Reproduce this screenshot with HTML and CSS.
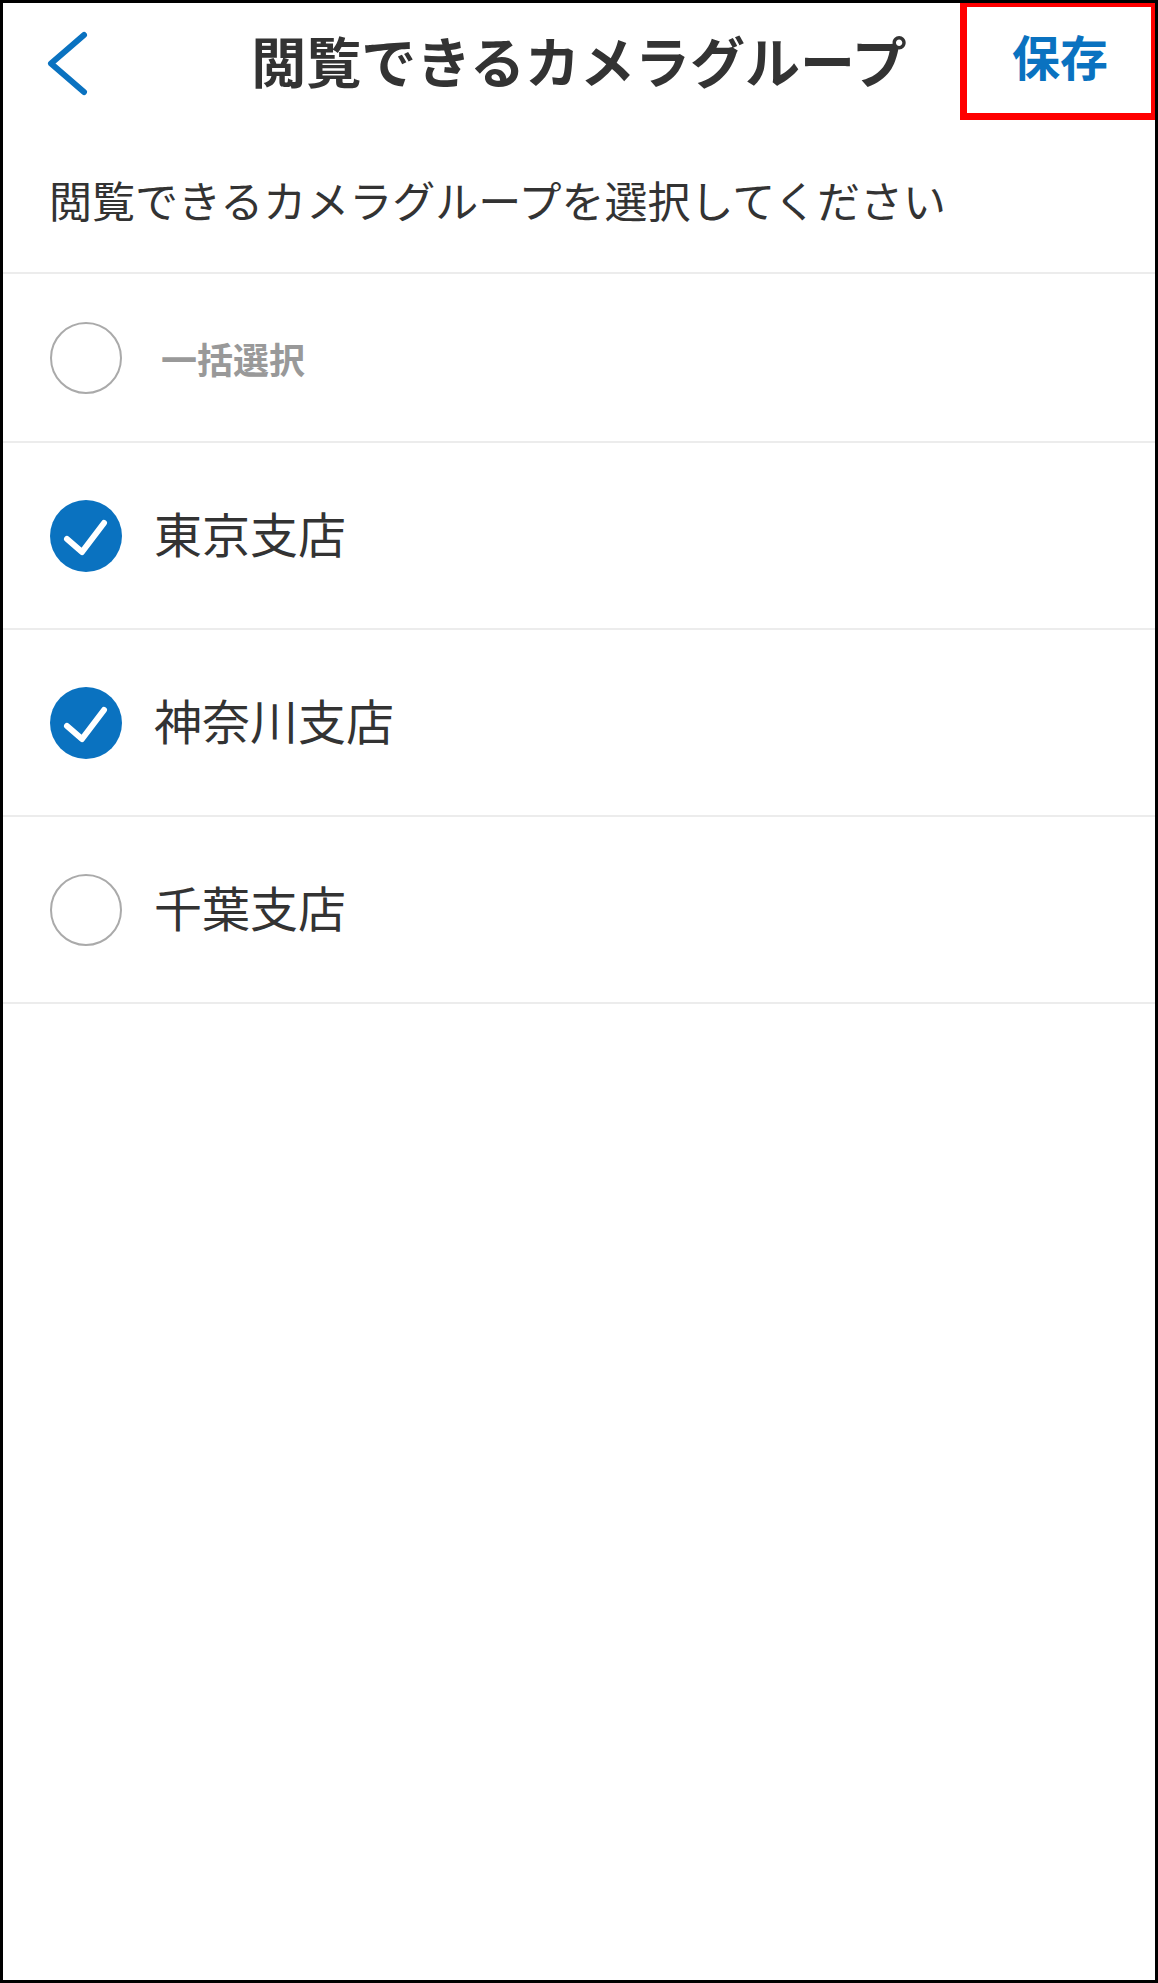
FILE: index.html
```html
<!DOCTYPE html>
<html lang="ja">
<head>
<meta charset="utf-8">
<title>閲覧できるカメラグループ</title>
<link rel="stylesheet" href="styles.css">
</head>
<body>
<div class="screen">
  <header class="header">
    <div class="back">
      <svg class="back-icon" width="46" height="76" viewBox="0 0 46 76" aria-hidden="true">
        <path d="M40 10 L7 38.5 L40 67" fill="none" stroke="#0a72c0" stroke-width="6" stroke-linecap="round" stroke-linejoin="round"/>
      </svg>
    </div>
    <h1 class="title">閲覧できるカメラグループ</h1>
    <div class="save">保存</div>
  </header>
  <p class="subtitle">閲覧できるカメラグループを選択してください</p>
  <ul class="list">
    <li class="row row-all">
      <span class="radio"></span>
      <span class="label-all">一括選択</span>
    </li>
    <li class="row">
      <span class="radio checked">
        <svg width="72" height="72" viewBox="0 0 72 72" aria-hidden="true"><path d="M17 39 L32 52 L54 23" fill="none" stroke="#fff" stroke-width="6" stroke-linecap="round" stroke-linejoin="round"/></svg>
      </span>
      <span class="label">東京支店</span>
    </li>
    <li class="row">
      <span class="radio checked">
        <svg width="72" height="72" viewBox="0 0 72 72" aria-hidden="true"><path d="M17 39 L32 52 L54 23" fill="none" stroke="#fff" stroke-width="6" stroke-linecap="round" stroke-linejoin="round"/></svg>
      </span>
      <span class="label">神奈川支店</span>
    </li>
    <li class="row">
      <span class="radio"></span>
      <span class="label">千葉支店</span>
    </li>
  </ul>
  <div class="highlight"></div>
</div>
</body>
</html>
```

FILE: styles.css
```css
* { box-sizing: border-box; }
html, body { margin: 0; padding: 0; background: #fff; }
body {
  font-family: "Noto Sans CJK JP", "Noto Sans", sans-serif;
  color: #333;
}
.screen {
  position: relative;
  width: 1158px;
  height: 1983px;
  border: 3px solid #000;
  background: #fff;
  overflow: hidden;
}
.header {
  display: grid;
  grid-template-columns: 1fr auto 1fr;
  align-items: center;
  height: 120px;
}
.back {
  padding-left: 41px;
  display: flex;
  align-items: center;
}
.back-icon { display: block; }
.title {
  margin: 0;
  padding-bottom: 8px;
  font-size: 55px;
  line-height: 1;
  font-weight: 700;
  color: #333;
  white-space: nowrap;
}
.save {
  justify-self: end;
  padding-right: 47px;
  padding-bottom: 16px;
  font-size: 48px;
  line-height: 1;
  font-weight: 700;
  color: #0a72c0;
}
.subtitle {
  margin: 0;
  height: 149px;
  padding: 4px 0 0 46px;
  display: flex;
  align-items: center;
  font-size: 43px;
  line-height: 1;
  color: #333;
}
.list {
  list-style: none;
  margin: 0;
  padding: 0;
  border-bottom: 2px solid #ececec;
}
.row {
  display: flex;
  align-items: center;
  gap: 32px;
  height: 187px;
  padding-left: 47px;
  border-top: 2px solid #ececec;
}
.row-all {
  height: 169px;
  gap: 39px;
}
.radio {
  flex: none;
  width: 72px;
  height: 72px;
  border-radius: 50%;
  border: 2px solid #aaa;
  display: flex;
}
.radio.checked {
  border: none;
  background: #0a72c0;
}
.radio svg { display: block; }
.label {
  padding-bottom: 8px;
  font-size: 48px;
  line-height: 1;
  color: #333;
}
.label-all {
  font-size: 36px;
  line-height: 1;
  font-weight: 700;
  color: #999;
}
.highlight {
  position: absolute;
  top: -3px;
  right: -3px;
  width: 198px;
  height: 120px;
  border: 7px solid #ff0000;
}
```
